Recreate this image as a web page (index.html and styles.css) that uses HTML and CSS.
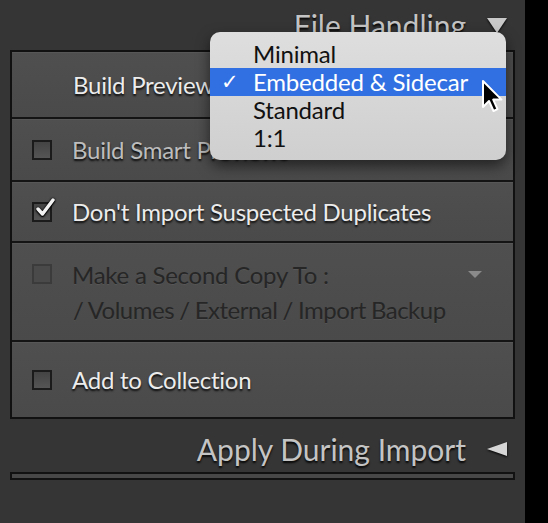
FILE: index.html
```html
<!DOCTYPE html>
<html lang="en">
  <head>
    <meta charset="UTF-8" />
    <meta name="viewport" content="width=device-width, initial-scale=1.0" />
    <link rel="stylesheet" href="styles.css">
    <title>File Handling</title>
  </head>
  <body>
    <div class="screen">
      <div class="panel">
        <!-- 見出し -->
        <div class="panel-head">
          <span class="head-title">File Handling</span>
          <span class="tri-down"></span>
        </div>

        <div class="box">
          <div class="row row-previews">
            <span class="label">Build Previews</span>
          </div>
          <div class="row row-smart">
            <span class="checkbox"></span>
            <span class="label dim">Build Smart Previews</span>
          </div>
          <div class="row row-dupes">
            <span class="checkbox checked">
              <svg width="22" height="22" viewBox="0 0 22 22">
                <path d="M4 12 L8.5 17 L19 3" fill="none" stroke="#f2f2f2" stroke-width="3.4" stroke-linecap="round" stroke-linejoin="round" />
              </svg>
            </span>
            <span class="label">Don't Import Suspected Duplicates</span>
          </div>
          <div class="row row-copy">
            <div class="copy-line">
              <span class="checkbox off"></span>
              <span class="label off">Make a Second Copy To :</span>
              <span class="tri-small"></span>
            </div>
            <div class="copy-path">/ Volumes / External / Import Backup</div>
          </div>
          <div class="row row-collection">
            <span class="checkbox"></span>
            <span class="label">Add to Collection</span>
          </div>
        </div>

        <div class="panel-head apply">
          <span class="head-title">Apply During Import</span>
          <span class="tri-left"></span>
        </div>

        <div class="box thin"></div>
      </div>
      <div class="edge"></div>

      <!-- ポップアップメニュー -->
      <ul class="menu">
        <li>Minimal</li>
        <li class="selected"><span class="tick">&#10003;</span>Embedded &amp; Sidecar</li>
        <li>Standard</li>
        <li>1:1</li>
      </ul>

      <svg class="cursor" width="24" height="36" viewBox="0 0 24 36">
        <path d="M2 2 L2 28 L8 22 L12.5 32 L16.5 30.2 L12.2 20.6 L20.5 20.6 Z" fill="#000" stroke="#fff" stroke-width="2" stroke-linejoin="round" />
      </svg>
    </div>
  </body>
</html>
```

FILE: styles.css
```css
/* 基本設定 */
* {
  margin: 0;
  padding: 0;
  box-sizing: border-box;
}

body {
  background-color: #000;
  font-family: Lato, "Open Sans", sans-serif;
}

.screen {
  position: relative;
  display: flex;
  width: 548px;
  height: 523px;
  overflow: hidden;
}

.panel {
  width: 525px;
  height: 523px;
  background-color: #353535;
  padding: 0 10px 0 10px;
}

.edge {
  flex: 1;
  background-color: #000;
}

/* 見出し */
.panel-head {
  display: flex;
  justify-content: flex-end;
  align-items: center;
  height: 50px;
  padding-right: 8px;
  gap: 21px;
}

.head-title {
  font-size: 30px;
  color: #c4c4c4;
  text-shadow: 0 2px 2px rgba(0, 0, 0, 0.9);
}

.apply {
  height: 53px;
  padding-top: 7px;
}

.tri-down {
  width: 0;
  height: 0;
  border-left: 10px solid transparent;
  border-right: 10px solid transparent;
  border-top: 15px solid #c8c8c8;
  filter: drop-shadow(0 1px 1px #000);
}

.tri-left {
  width: 0;
  height: 0;
  border-top: 7px solid transparent;
  border-bottom: 7px solid transparent;
  border-right: 20px solid #d6d6d6;
  filter: drop-shadow(0 1px 1px #000);
}

/* パネルの箱 */
.box {
  border: 2px solid #111;
  background-color: #4b4b4b;
}

.box.thin {
  height: 8px;
  background-color: #474747;
}

.row {
  display: flex;
  align-items: center;
  gap: 20px;
  padding-left: 20px;
  background: linear-gradient(#4f4f4f, #4a4a4a);
  box-shadow: inset 0 1px 0 rgba(255, 255, 255, 0.05);
}

.row + .row {
  border-top: 2px solid #141414;
}

.row-previews {
  height: 65px;
  padding-left: 61px;
}

.row-smart {
  height: 63px;
}

.row-dupes {
  height: 61px;
}

.row-copy {
  height: 99px;
  flex-direction: column;
  align-items: stretch;
  justify-content: center;
  gap: 6px;
}

.row-collection {
  height: 77px;
}

.label {
  font-size: 24px;
  letter-spacing: -0.25px;
  color: #ececec;
  text-shadow: 0 2px 2px rgba(0, 0, 0, 0.85);
  white-space: nowrap;
}

.label.dim {
  color: #bdbdbd;
}

.label.off {
  color: #262626;
  text-shadow: 0 1px 0 rgba(255, 255, 255, 0.06);
}

.copy-line {
  display: flex;
  align-items: center;
  gap: 20px;
}

.copy-path {
  padding-left: 41px;
  font-size: 24px;
  letter-spacing: -0.5px;
  word-spacing: -0.5px;
  color: #262626;
  text-shadow: 0 1px 0 rgba(255, 255, 255, 0.06);
}

.tri-small {
  margin-left: auto;
  margin-right: 31px;
  width: 0;
  height: 0;
  border-left: 7px solid transparent;
  border-right: 7px solid transparent;
  border-top: 7px solid #8a8a8a;
}

/* チェックボックス */
.checkbox {
  width: 20px;
  height: 20px;
  flex: none;
  border: 2px solid #1b1b1b;
  background: linear-gradient(#444, #555);
  position: relative;
}

.checkbox.checked svg {
  position: absolute;
  left: 0;
  top: -7px;
  filter: drop-shadow(0 0 1px #000) drop-shadow(0 1px 0 #000);
}

.checkbox.off {
  border-color: #3b3b3b;
  background: #4a4a4a;
}

/* メニュー */
.menu {
  position: absolute;
  left: 210px;
  top: 32px;
  width: 296px;
  height: 128px;
  padding: 8px 0;
  list-style: none;
  border-radius: 10px;
  background: linear-gradient(#dedede, #cfcfcf);
  box-shadow: 0 6px 14px rgba(0, 0, 0, 0.55);
}

.menu li {
  position: relative;
  height: 28px;
  line-height: 28px;
  padding-left: 43px;
  font-size: 24px;
  letter-spacing: -0.2px;
  color: #111;
}

.menu li.selected {
  background-color: #3170e2;
  color: #fff;
}

.tick {
  position: absolute;
  left: 11px;
  top: 0;
  font-family: "DejaVu Sans", sans-serif;
  font-size: 21px;
  font-weight: bold;
}

.cursor {
  position: absolute;
  left: 481px;
  top: 79px;
}
```
